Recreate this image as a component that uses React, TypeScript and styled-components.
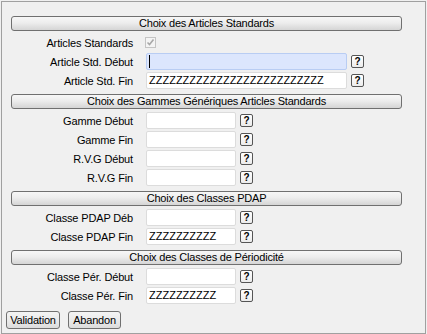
import styled, { createGlobalStyle } from 'styled-components'

const GlobalStyle = createGlobalStyle`
  body {
    margin: 0;
    background: #f0f0f0;
    font-family: 'Liberation Sans', Arial, sans-serif;
    font-size: 11px;
    color: #000;
  }
`

interface IField {
  label: string
  wide?: boolean
  value?: string
  focused?: boolean
}

interface ISection {
  title: string
  checkbox?: string
  fields: IField[]
}

const fill = (n: number) => 'Z'.repeat(n)

const sections: ISection[] = [
  {
    title: 'Choix des Articles Standards',
    checkbox: 'Articles Standards',
    fields: [
      { label: 'Article Std. Début', wide: true, focused: true },
      { label: 'Article Std. Fin', wide: true, value: fill(26) },
    ],
  },
  {
    title: 'Choix des Gammes Génériques Articles Standards',
    fields: [
      { label: 'Gamme Début' },
      { label: 'Gamme Fin' },
      { label: 'R.V.G Début' },
      { label: 'R.V.G Fin' },
    ],
  },
  {
    title: 'Choix des Classes PDAP',
    fields: [
      { label: 'Classe PDAP Déb' },
      { label: 'Classe PDAP Fin', value: fill(10) },
    ],
  },
  {
    title: 'Choix des Classes de Périodicité',
    fields: [
      { label: 'Classe Pér. Début' },
      { label: 'Classe Pér. Fin', value: fill(10) },
    ],
  },
]

export default function App() {
  return (
    <>
      <GlobalStyle />
      <Frame>
        <Sections>
          {sections.map((section) => (
            <Section key={section.title}>
              <Header>{section.title}</Header>
              <Rows>
                {section.checkbox && (
                  <Row>
                    <Label>{section.checkbox}</Label>
                    <CheckBox>
                      <svg width="9" height="9" viewBox="0 0 9 9">
                        <path
                          d="M1.5 4.5 L3.5 6.5 L7.5 1.5"
                          stroke="#a8a8a8"
                          strokeWidth="1.6"
                          fill="none"
                        />
                      </svg>
                    </CheckBox>
                  </Row>
                )}
                {section.fields.map((field) => (
                  <Row key={field.label}>
                    <Label>{field.label}</Label>
                    <Input $wide={field.wide} $focused={field.focused}>
                      {field.focused && <Caret />}
                      {field.value}
                    </Input>
                    <HelpButton>?</HelpButton>
                  </Row>
                ))}
              </Rows>
            </Section>
          ))}
        </Sections>
        <Actions>
          <Button $width={54}>Validation</Button>
          <Button $width={53}>Abandon</Button>
        </Actions>
      </Frame>
    </>
  )
}

const Frame = styled.div`
  margin: 1px 0 0 1px;
  width: 425px;
  height: 333px;
  box-sizing: border-box;
  border: 1px solid #a0a0a0;
  padding-top: 14px;
  display: flex;
  flex-direction: column;
`

const Sections = styled.div`
  display: flex;
  flex-direction: column;
  gap: 5px;
  padding-left: 9px;
`

const Section = styled.div`
  display: flex;
  flex-direction: column;
  gap: 3px;
`

const Header = styled.div`
  width: 391px;
  height: 15px;
  box-sizing: border-box;
  border: 1px solid #707070;
  border-radius: 3px;
  background: linear-gradient(#f7f7f7 0%, #ededed 45%, #d5d5d5 100%);
  display: flex;
  align-items: center;
  justify-content: center;
  line-height: 13px;
  letter-spacing: -0.2px;
`

const Rows = styled.div`
  display: flex;
  flex-direction: column;
  gap: 2px;
`

const Row = styled.div`
  display: flex;
  align-items: center;
  height: 17px;
`

const Label = styled.div`
  width: 122px;
  text-align: right;
  margin-right: 13px;
  white-space: nowrap;
  letter-spacing: -0.15px;
`

const CheckBox = styled.div`
  width: 11px;
  height: 11px;
  box-sizing: border-box;
  margin-left: -1px;
  border: 1px solid #c4c4c4;
  background: #f4f4f4;
  display: flex;
  align-items: center;
  justify-content: center;
`

const Input = styled.div<{ $wide?: boolean; $focused?: boolean }>`
  position: relative;
  width: ${(p) => (p.$wide ? 201 : 90)}px;
  height: 17px;
  box-sizing: border-box;
  border: 1px solid ${(p) => (p.$focused ? '#b9cdf3' : '#dcdcdc')};
  border-radius: 2px;
  background: ${(p) => (p.$focused ? '#dce6fd' : '#ffffff')};
  padding-left: 2px;
  line-height: 15px;
  white-space: nowrap;
  overflow: hidden;
  display: flex;
  align-items: center;
`

const Caret = styled.span`
  display: block;
  width: 1px;
  height: 13px;
  background: #000;
`

const HelpButton = styled.div`
  width: 13px;
  height: 13px;
  box-sizing: border-box;
  margin-left: 4px;
  border: 1px solid #555;
  border-radius: 2px;
  background: linear-gradient(#ffffff, #ececec);
  font-weight: bold;
  font-size: 10px;
  line-height: 11px;
  text-align: center;
`

const Actions = styled.div`
  display: flex;
  gap: 8px;
  margin-top: 7px;
  padding-left: 4px;
`

const Button = styled.div<{ $width: number }>`
  width: ${(p) => p.$width}px;
  height: 18px;
  box-sizing: border-box;
  border: 1px solid #707070;
  border-radius: 3px;
  background: linear-gradient(#f4f4f4 0%, #ebebeb 50%, #dcdcdc 100%);
  display: flex;
  align-items: center;
  justify-content: center;
  letter-spacing: -0.2px;
`
